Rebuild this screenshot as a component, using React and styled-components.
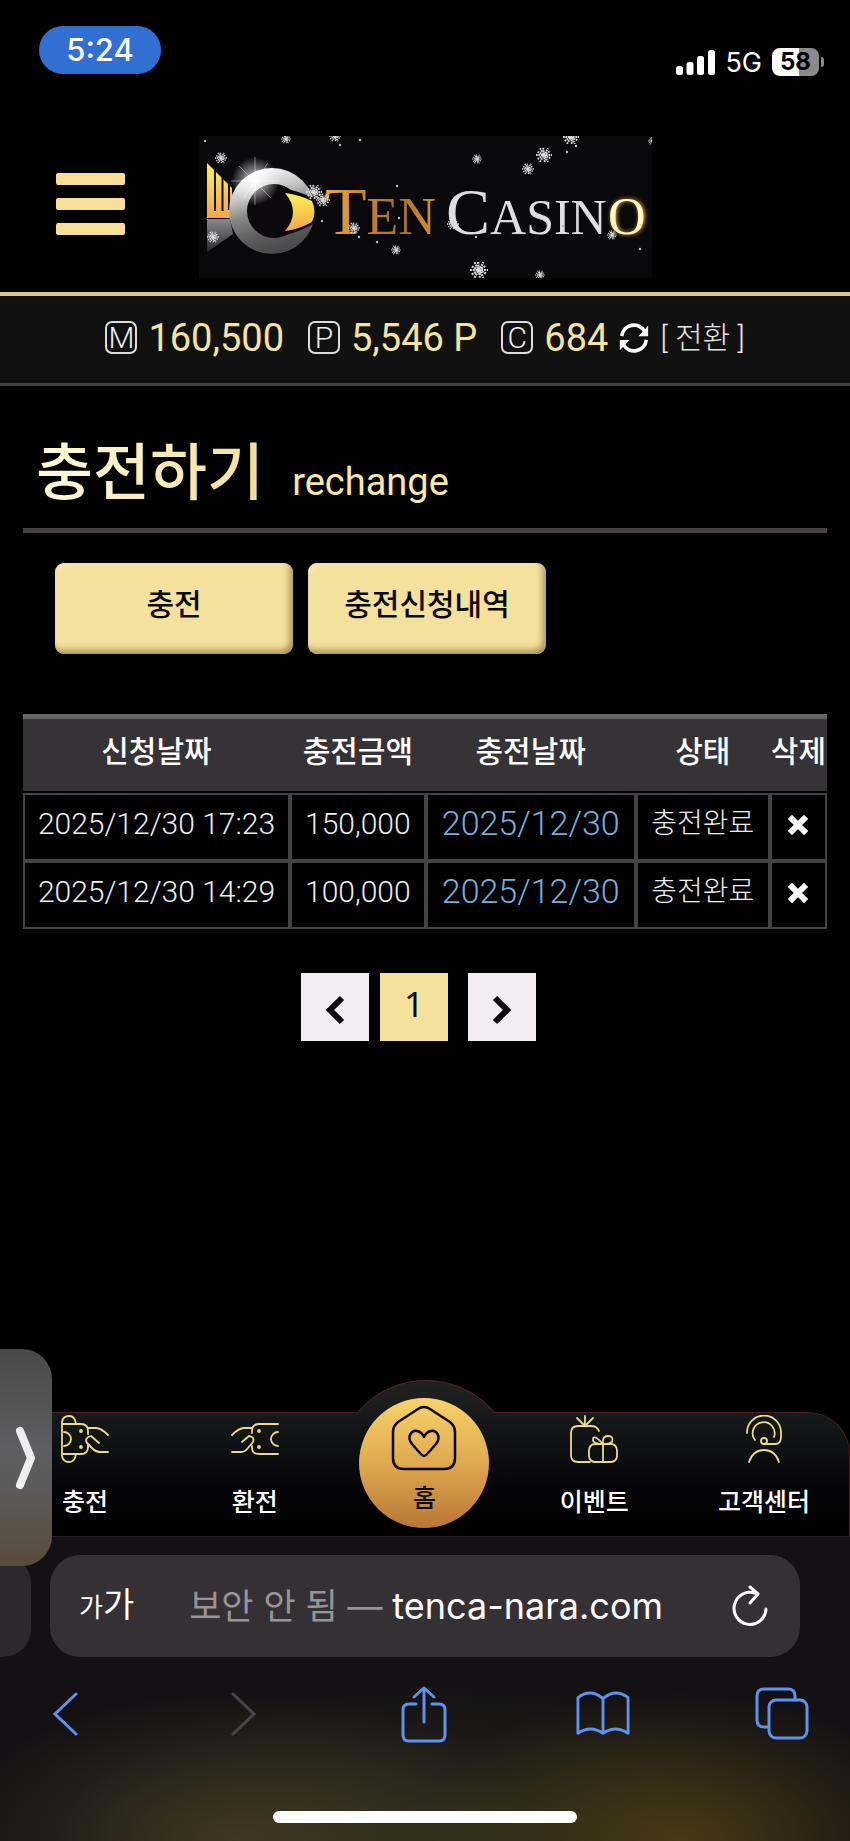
import React from 'react';
import styled, { createGlobalStyle } from 'styled-components';

const GlobalStyle = createGlobalStyle`
  * {
    box-sizing: border-box;
  }

  body {
    margin: 0;
    background: #000;
    color: #fff;
    font-family: Roboto, 'Noto Sans CJK KR', sans-serif;
  }

  button {
    margin: 0;
    padding: 0;
    border: 0;
    background: none;
    color: inherit;
    font: inherit;
    cursor: pointer;
  }

  a {
    color: inherit;
    text-decoration: none;
  }

  svg {
    display: block;
  }
`;

const Page = styled.div`
  position: relative;
  display: flex;
  flex-direction: column;
  min-height: 100vh;
  overflow: hidden;
`;

/* Status bar */

const StatusBar = styled.div`
  display: flex;
  align-items: flex-start;
  justify-content: space-between;
  height: 120px;
  padding: 26px 26px 0 39px;
  font-family: Inter, sans-serif;
`;

const Clock = styled.div`
  width: 122px;
  height: 48px;
  border-radius: 24px;
  background: #3170d2;
  font-size: 31px;
  font-weight: 500;
  line-height: 48px;
  text-align: center;
`;

const StatusIcons = styled.div`
  display: flex;
  align-items: center;
  gap: 10px;
  height: 28px;
  margin-top: 22px;
  font-size: 27px;
  font-weight: 400;
`;

const Battery = styled.div`
  position: relative;
  width: 47px;
  height: 28px;
  margin-right: 5px;
  border-radius: 8px;
  background: linear-gradient(90deg, #fff 58%, #8b8b8b 58%);
  color: #000;
  font-size: 24px;
  font-weight: 700;
  line-height: 28px;
  text-align: center;

  &::after {
    content: '';
    position: absolute;
    top: 9px;
    right: -5px;
    width: 3px;
    height: 10px;
    border-radius: 0 3px 3px 0;
    background: #8b8b8b;
  }
`;

/* Header */

const Header = styled.header`
  display: grid;
  grid-template-columns: 1fr auto 1fr;
  align-items: center;
  height: 176px;
  padding: 2px 56px 0;
  border-bottom: 4px solid #d9c89a;
`;

const MenuButton = styled.button`
  display: flex;
  flex-direction: column;
  gap: 13px;
  width: 69px;
  margin-bottom: 6px;
`;

const MenuLine = styled.span`
  height: 12px;
  border-radius: 2px;
  background: #f7df98;
`;

const Balance = styled.section`
  display: flex;
  align-items: center;
  justify-content: center;
  gap: 24px;
  height: 90px;
  padding-bottom: 4px;
  border-bottom: 3px solid #454346;
  background: #121112;
`;

const BalanceItem = styled.div`
  display: flex;
  align-items: center;
  gap: 11px;
  color: #f6e3a0;
  font-size: 38px;
  line-height: 40px;
`;

const BalanceMark = styled.span`
  width: 32px;
  height: 33px;
  border: 2px solid #ddd;
  border-radius: 7px;
  color: #eee;
  font-size: 30px;
  font-weight: 300;
  line-height: 30px;
  text-align: center;
`;

const ConvertButton = styled.button`
  color: #e6e6e6;
  font-size: 30px;
  font-weight: 300;
  line-height: 36px;
`;

/* Page content */

const Main = styled.main`
  flex: 1;
  padding: 0 23px;
`;

const TitleRow = styled.div`
  display: flex;
  align-items: baseline;
  gap: 28px;
  height: 147px;
  padding: 44px 13px 0;
  border-bottom: 5px solid #464246;
`;

const Title = styled.h1`
  margin: 0;
  background: linear-gradient(90deg, #fffbdc, #f5e09a);
  background-clip: text;
  color: transparent;
  font-size: 62px;
  font-weight: 500;
  line-height: 88px;
`;

const SubTitle = styled.span`
  color: #f8e7a8;
  font-size: 38px;
`;

const TabRow = styled.div`
  display: flex;
  gap: 15px;
  padding: 30px 32px 60px;
`;

const TabButton = styled.button`
  width: 238px;
  height: 91px;
  padding-bottom: 14px;
  border-radius: 9px;
  background: #f4e19c;
  box-shadow: inset -3px -4px 6px rgba(90, 70, 10, 0.5), inset 2px 2px 5px rgba(255, 240, 220, 0.6);
  color: #0a0806;
  font-size: 30px;
  font-weight: 500;
`;

const Table = styled.table`
  width: 100%;
  table-layout: fixed;
  border-collapse: separate;
  border-spacing: 0;
  text-align: center;
`;

const Col = styled.col`
  width: ${(props) => props.$width};
`;

const HeadCell = styled.th`
  height: 79px;
  padding: 0 0 12px;
  border-top: 5px solid #676467;
  border-bottom: 2px solid #000;
  background: #363336;
  background-clip: padding-box;
  font-size: 30px;
  font-weight: 500;
  white-space: nowrap;
`;

const Cell = styled.td`
  height: 68px;
  padding: 0 0 6px;
  border: 2px solid #464346;
  color: #eee;
  font-size: ${(props) => props.$size || 30}px;
  font-weight: 300;
  line-height: 40px;
  white-space: nowrap;
`;

const DateText = styled.span`
  color: #76addc;
  font-size: 34px;
`;

const DeleteButton = styled.button`
  display: block;
  margin: 2px auto 0;
`;

const Pagination = styled.nav`
  display: flex;
  justify-content: center;
  gap: 11px;
  padding-right: 13px;
  margin-top: 44px;
`;

const PageButton = styled.button`
  display: flex;
  align-items: center;
  justify-content: center;
  width: 68px;
  height: 68px;
  padding-top: 6px;
  background: #f1edf1;
  color: #0b090b;

  &:last-child {
    margin-left: 9px;
  }

  &[aria-current] {
    padding: 0 0 8px;
    background: #f4e19c;
    font-family: 'Noto Sans', sans-serif;
    font-size: 35px;
  }
`;

/* Site navigation */

const NavWrap = styled.div`
  position: relative;
`;

const NavBulge = styled.div`
  position: absolute;
  z-index: 1;
  top: -32px;
  left: calc(50% - 70px);
  width: 140px;
  height: 33px;
  overflow: hidden;

  &::before {
    content: '';
    position: absolute;
    left: -19px;
    width: 178px;
    height: 178px;
    border: 1px solid #5c2424;
    border-radius: 50%;
    background: linear-gradient(#222121, #161818 40px);
  }
`;

const BottomNav = styled.nav`
  display: grid;
  grid-template-columns: repeat(5, 1fr);
  height: 124px;
  border: 1px solid #4d1d20;
  border-width: 1px 1px 0 0;
  border-radius: 0 42px 0 0;
  background: linear-gradient(#171a1b, #060507 60%, #000);
`;

const NavLink = styled.a`
  display: flex;
  flex-direction: column;
  align-items: center;
  gap: 21px;
  padding-top: 2px;
  font-size: 25px;
  font-weight: 500;
  line-height: 38px;
`;

const HomeLink = styled.a`
  position: relative;
  z-index: 2;
  display: flex;
  flex-direction: column;
  align-items: center;
  justify-self: center;
  gap: 10px;
  width: 130px;
  height: 130px;
  margin-top: -15px;
  padding-top: 7px;
  border-radius: 50%;
  background: linear-gradient(#f9d36a, #dfa950 50%, #b97634);
  color: #0c0703;
  font-size: 25px;
  font-weight: 500;
  line-height: 36px;
`;

/* Browser chrome */

const BrowserBar = styled.footer`
  height: 305px;
  padding-top: 18px;
  border-top: 1px solid #252326;
  background:
    radial-gradient(ellipse 260px 150px at 80% 100%, rgba(82, 65, 20, 0.8), transparent),
    radial-gradient(ellipse 300px 150px at 28% 100%, rgba(76, 64, 38, 0.75), transparent),
    radial-gradient(ellipse 380px 160px at 52% 100%, rgba(50, 53, 32, 0.7), transparent),
    #131114;
`;

const AddressRow = styled.div`
  display: flex;
  gap: 19px;
  padding-right: 50px;
`;

const PreviousTab = styled.div`
  width: 31px;
  height: 102px;
  border-radius: 0 28px 28px 0;
  background: #2c292c;
`;

const AddressBar = styled.div`
  display: flex;
  flex: 1;
  align-items: center;
  justify-content: space-between;
  height: 102px;
  padding: 0 32px 0 29px;
  border-radius: 30px;
  background: #343034;
`;

const TextSizeButton = styled.button`
  font-size: 34px;
  line-height: 44px;

  small {
    font-size: 26px;
  }
`;

const Address = styled.button`
  margin-right: 14px;
  font-family: Inter, 'Noto Sans CJK KR', sans-serif;
  font-size: 36px;
  line-height: 44px;
  white-space: nowrap;
`;

const Insecure = styled.span`
  color: #989498;
  font-size: 35px;
`;

const Toolbar = styled.div`
  display: flex;
  align-items: center;
  justify-content: space-between;
  height: 60px;
  margin-top: 27px;
  padding: 0 41px 0 38px;
  color: #5f91ee;
`;

const ToolButton = styled.button`
  display: flex;
  justify-content: center;
  width: 54px;

  &:disabled {
    color: #48464a;
  }
`;

const HomeIndicator = styled.div`
  width: 304px;
  height: 12px;
  margin: 67px auto 0;
  border-radius: 6px;
  background: #fff;
`;

const SideHandle = styled.button`
  position: absolute;
  z-index: 3;
  bottom: 275px;
  left: 0;
  display: flex;
  align-items: center;
  width: 52px;
  height: 217px;
  padding-left: 14px;
  border-radius: 0 30px 30px 0;
  background: linear-gradient(#494949, #5e5e60 45%, #5b5a5a 65%, #594b3b);
`;

const flakes = [
  [22, 22, 6], [87, 3, 5], [136, 0, 6], [14, 101, 6], [115, 56, 8], [124, 64, 7],
  [155, 92, 6], [197, 114, 5], [278, 23, 5], [329, 33, 6], [345, 19, 8], [372, 1, 8],
  [254, 88, 6], [280, 134, 9], [341, 139, 5], [413, 99, 5], [453, 5, 4]
];

const sparks = [
  [6, 5], [141, 9], [161, 4], [123, 85], [160, 101], [178, 106],
  [200, 82], [198, 50], [368, 16], [377, 10], [364, 90], [277, 101], [441, 113]
];

function Logo() {
  return (
    <svg width="453" height="142" viewBox="0 0 453 142" role="img" aria-label="Ten Casino">
      <defs>
        <linearGradient id="ring" x1="0.3" y1="0" x2="0.6" y2="1">
          <stop offset="0" stopColor="#fff" />
          <stop offset="0.3" stopColor="#c4c4c4" />
          <stop offset="0.5" stopColor="#858585" />
          <stop offset="0.75" stopColor="#5c5c5c" />
          <stop offset="1" stopColor="#474548" />
        </linearGradient>
        <linearGradient id="gold" x1="0" y1="0" x2="0" y2="1">
          <stop offset="0" stopColor="#fff05c" />
          <stop offset="0.5" stopColor="#f8cc4b" />
          <stop offset="1" stopColor="#f3a653" />
        </linearGradient>
        <linearGradient id="bronze" x1="0" y1="0" x2="1" y2="0">
          <stop offset="0" stopColor="#eda93f" />
          <stop offset="0.35" stopColor="#c8862e" />
          <stop offset="0.65" stopColor="#a96f29" />
          <stop offset="1" stopColor="#d78f2b" />
        </linearGradient>
        <linearGradient id="steel" x1="0" y1="0" x2="0" y2="1">
          <stop offset="0" stopColor="#8a8a8c" />
          <stop offset="1" stopColor="#2a2a2c" />
        </linearGradient>
        <radialGradient id="glow">
          <stop offset="0" stopColor="#fff" />
          <stop offset="0.3" stopColor="#fff" stopOpacity="0.6" />
          <stop offset="1" stopColor="#fff" stopOpacity="0" />
        </radialGradient>
        <filter id="halo" x="-50%" y="-50%" width="200%" height="200%">
          <feDropShadow dx="1" dy="0" stdDeviation="2" floodColor="#f3ad28" />
        </filter>
        <g id="flake" stroke="#dcdcdc" strokeWidth="0.24">
          <path d="M-1 0H1M-.5-.86.5.86M-.5.86.5-.86M-.8-.4.8.4M-.1-.9.1.9M-.8.5.8-.5" strokeDasharray="0.22 0.09" />
        </g>
      </defs>
      <rect width="453" height="142" fill="#09080b" />
      <path d="M8 83H31L34 98 8 116Z" fill="url(#steel)" />
      <path d="M8 27 33 52V68L31 82H8Z" fill="url(#gold)" />
      <path d="M16 34V75M23.5 41V75M30 47V74" stroke="#171207" strokeWidth="2" />
      <circle cx="73" cy="75" r="43" fill="url(#ring)" />
      <circle cx="75" cy="75" r="27" fill="#0b090c" />
      <path d="M79 50Q98 55 118 63V86Q99 97 79 101Q93 76 79 50Z" fill="#0b090c" />
      <path d="M86 57Q101 59 113 65Q118 76 113 86Q101 93 86 95Q102 76 86 57Z" fill="url(#gold)" />
      <circle cx="56" cy="45" r="24" fill="url(#glow)" />
      <path d="M56 21V69M32 45H80M40 30 72 62M45 61 69 27" stroke="#fff" strokeWidth="0.7" opacity="0.6" />
      <g fontFamily="'Liberation Serif', serif">
        <text x="126" y="98" fontSize="68" fill="url(#bronze)">
          T<tspan fontSize="52">EN</tspan>
        </text>
        <text x="247" y="98" fontSize="66" fill="#dddde2">
          C<tspan fontSize="50">ASIN</tspan>
        </text>
        <text x="409" y="98" fontSize="52" fill="#fff5c4" filter="url(#halo)">O</text>
      </g>
      {flakes.map(([x, y, r]) => (
        <use key={`${x}-${y}`} href="#flake" transform={`translate(${x} ${y}) scale(${r})`} />
      ))}
      {sparks.map(([x, y]) => (
        <circle key={`${x}-${y}`} cx={x} cy={y} r="1.2" fill="#bbb" />
      ))}
    </svg>
  );
}

function SignalIcon() {
  return (
    <svg width="39" height="26" viewBox="0 0 39 26" fill="#fff" aria-hidden="true">
      <rect y="17" width="7" height="9" rx="2.5" />
      <rect x="10.5" y="13" width="7" height="13" rx="2.5" />
      <rect x="21" y="7" width="7" height="19" rx="2.5" />
      <rect x="32" y="1" width="7" height="25" rx="2.5" />
    </svg>
  );
}

function SyncIcon() {
  return (
    <svg width="30" height="30" viewBox="0 0 34 32" preserveAspectRatio="none" aria-hidden="true">
      <g fill="none" stroke="#fff" strokeWidth="4">
        <path d="M3 14C5 1 22-2 29 9" />
        <path d="M31 18C29 31 12 34 5 23" />
      </g>
      <path d="M33 3V14H22ZM1 29V18H12Z" fill="#fff" />
    </svg>
  );
}

function CrossIcon() {
  return (
    <svg width="20" height="20" viewBox="0 0 20 20" aria-hidden="true">
      <path d="M4 4 16 16M16 4 4 16" stroke="#fff" strokeWidth="6" strokeLinecap="square" />
    </svg>
  );
}

function ArrowIcon({ right }) {
  return (
    <svg width="22" height="30" viewBox="0 0 22 30" fill="none" stroke="currentColor" strokeWidth="6" aria-hidden="true">
      <path d={right ? 'M4 3 16 15 4 27' : 'M18 3 6 15 18 27'} />
    </svg>
  );
}

function LineIcon({ children }) {
  return (
    <svg width="48" height="48" viewBox="0 0 48 48" fill="none" stroke="#ead98f" strokeWidth="1.8" strokeLinecap="round" strokeLinejoin="round" aria-hidden="true">
      {children}
    </svg>
  );
}

const DepositIcon = () => (
  <LineIcon>
    <path d="M1 9V7Q2 1 8 1T15 9M1 39V41Q2 47 8 47T15 39M1 8V40M1 9H20Q27 9 27 16V19M27 29V32Q27 39 20 39H1" />
    <path d="M3 17A7 7 0 0 1 3 31" />
    <circle cx="20" cy="16" r="1" fill="#ead98f" />
    <circle cx="20" cy="32" r="1" fill="#ead98f" />
    <path d="M27 13H35Q40 13 47 20M38 28 30 21Q23 23 26 28L32 34Q35 37 39 37H47" />
  </LineIcon>
);

const WithdrawIcon = () => (
  <LineIcon>
    <path d="M47 9H28Q21 9 21 16V18M21 31V33Q21 39 28 39H47M47 17A7 7 0 0 0 47 31" />
    <circle cx="28" cy="16" r="1" fill="#ead98f" />
    <circle cx="28" cy="32" r="1" fill="#ead98f" />
    <path d="M21 13H13Q8 13 1 20M11 27 18 21Q24 22 22 27L17 33Q14 37 10 37H1" />
  </LineIcon>
);

const EventIcon = () => (
  <LineIcon>
    <path d="M15 11V1M15 11 7 3M15 11 23 3M20 47H8Q1 47 1 40V18Q1 11 8 11H21Q27 11 29 16" />
    <rect x="19" y="29" width="28" height="18" rx="6" />
    <path d="M33 29V47M33 29Q22 29 23 24T33 29M33 29Q32 21 38 21T42 27Q39 29 33 29" />
  </LineIcon>
);

const SupportIcon = () => (
  <LineIcon>
    <path d="M7 18A17 17 0 0 1 41 17V22Q41 29 35 29H24M15 25A11 11 0 1 1 34 22" />
    <circle cx="24" cy="26" r="3" />
    <path d="M9 47Q13 35 24 35T39 47" />
  </LineIcon>
);

function HomeIcon() {
  return (
    <svg width="66" height="66" viewBox="0 0 66 66" fill="none" stroke="#0c0703" strokeWidth="2.5" strokeLinejoin="round" aria-hidden="true">
      <path d="M27 4Q33 0 39 4L59 17Q64 21 64 27V53Q64 64 53 64H13Q2 64 2 53V27Q2 21 7 17Z" />
      <path d="M33 51Q31 51 21 39C15 31 21 25 26 26Q31 27 33 32Q35 27 40 26C45 25 51 31 45 39Q35 51 33 51Z" />
    </svg>
  );
}

const ReloadIcon = () => (
  <svg width="36" height="42" viewBox="0 0 36 42" fill="none" stroke="#fff" strokeWidth="3" strokeLinecap="round" strokeLinejoin="round" aria-hidden="true">
    <path d="M34 24A16 16 0 1 1 25 9M18 2 26 9 18 18" />
  </svg>
);

const Chevron = ({ right }) => (
  <svg width="26" height="44" viewBox="0 0 26 44" fill="none" stroke="currentColor" strokeWidth="3" strokeLinecap="round" aria-hidden="true">
    <path d={right ? 'M2 2 23 22 2 42' : 'M24 2 3 22 24 42'} />
  </svg>
);

const ShareIcon = () => (
  <svg width="46" height="58" viewBox="0 0 46 58" fill="none" stroke="currentColor" strokeWidth="3" strokeLinecap="round" strokeLinejoin="round" aria-hidden="true">
    <path d="M15 19H8Q2 19 2 25V50Q2 56 8 56H38Q44 56 44 50V25Q44 19 38 19H31M23 37V3M13 12 23 3 33 12" />
  </svg>
);

const BookIcon = () => (
  <svg width="56" height="50" viewBox="0 0 56 50" fill="none" stroke="currentColor" strokeWidth="3" strokeLinejoin="round" aria-hidden="true">
    <path d="M28 9Q15-2 2 8V45Q15 36 28 45Q41 36 54 45V8Q41-2 28 9V45" />
  </svg>
);

const TabsIcon = () => (
  <svg width="54" height="54" viewBox="0 0 54 54" fill="none" stroke="currentColor" strokeWidth="3" aria-hidden="true">
    <path d="M14 40H9Q2 40 2 33V9Q2 2 9 2H33Q40 2 40 9V13" />
    <rect x="14" y="13" width="38" height="38" rx="7" />
  </svg>
);

const rows = [
  { requested: '2025/12/30 17:23', amount: '150,000', date: '2025/12/30', status: '충전완료' },
  { requested: '2025/12/30 14:29', amount: '100,000', date: '2025/12/30', status: '충전완료' }
];

export default function App() {
  return (
    <>
      <GlobalStyle />
      <Page>
        <StatusBar>
          <Clock>5:24</Clock>
          <StatusIcons>
            <SignalIcon />
            <span>5G</span>
            <Battery>58</Battery>
          </StatusIcons>
        </StatusBar>

        <Header>
          <MenuButton aria-label="메뉴">
            <MenuLine />
            <MenuLine />
            <MenuLine />
          </MenuButton>
          <a href="#home"><Logo /></a>
        </Header>

        <Balance>
          <BalanceItem><BalanceMark>M</BalanceMark>160,500</BalanceItem>
          <BalanceItem><BalanceMark>P</BalanceMark>5,546 P</BalanceItem>
          <BalanceItem>
            <BalanceMark>C</BalanceMark>684
            <SyncIcon />
            <ConvertButton>[ 전환 ]</ConvertButton>
          </BalanceItem>
        </Balance>

        <Main>
          <TitleRow>
            <Title>충전하기</Title>
            <SubTitle>rechange</SubTitle>
          </TitleRow>

          <TabRow>
            <TabButton>충전</TabButton>
            <TabButton>충전신청내역</TabButton>
          </TabRow>

          <Table>
            <colgroup>
              <Col $width="33.2%" />
              <Col $width="16.9%" />
              <Col $width="26.1%" />
              <Col $width="16.7%" />
              <Col $width="7.1%" />
            </colgroup>
            <thead>
              <tr>
                <HeadCell>신청날짜</HeadCell>
                <HeadCell>충전금액</HeadCell>
                <HeadCell>충전날짜</HeadCell>
                <HeadCell>상태</HeadCell>
                <HeadCell>삭제</HeadCell>
              </tr>
            </thead>
            <tbody>
              {rows.map((row) => (
                <tr key={row.requested}>
                  <Cell>{row.requested}</Cell>
                  <Cell>{row.amount}</Cell>
                  <Cell><DateText>{row.date}</DateText></Cell>
                  <Cell $size={28}>{row.status}</Cell>
                  <Cell>
                    <DeleteButton aria-label="삭제"><CrossIcon /></DeleteButton>
                  </Cell>
                </tr>
              ))}
            </tbody>
          </Table>

          <Pagination>
            <PageButton aria-label="이전"><ArrowIcon /></PageButton>
            <PageButton aria-current="page">1</PageButton>
            <PageButton aria-label="다음"><ArrowIcon right /></PageButton>
          </Pagination>
        </Main>

        <NavWrap>
          <NavBulge />
          <BottomNav>
            <NavLink href="#deposit"><DepositIcon />충전</NavLink>
            <NavLink href="#withdraw"><WithdrawIcon />환전</NavLink>
            <HomeLink href="#home"><HomeIcon />홈</HomeLink>
            <NavLink href="#event"><EventIcon />이벤트</NavLink>
            <NavLink href="#support"><SupportIcon />고객센터</NavLink>
          </BottomNav>
        </NavWrap>

        <BrowserBar>
          <AddressRow>
            <PreviousTab />
            <AddressBar>
              <TextSizeButton><small>가</small>가</TextSizeButton>
              <Address><Insecure>보안 안 됨 — </Insecure>tenca-nara.com</Address>
              <button aria-label="새로고침"><ReloadIcon /></button>
            </AddressBar>
          </AddressRow>
          <Toolbar>
            <ToolButton aria-label="뒤로"><Chevron /></ToolButton>
            <ToolButton aria-label="앞으로" disabled><Chevron right /></ToolButton>
            <ToolButton aria-label="공유"><ShareIcon /></ToolButton>
            <ToolButton aria-label="책갈피"><BookIcon /></ToolButton>
            <ToolButton aria-label="탭"><TabsIcon /></ToolButton>
          </Toolbar>
          <HomeIndicator />
        </BrowserBar>

        <SideHandle aria-label="열기">
          <svg width="26" height="66" viewBox="0 0 26 66" fill="none" stroke="#eeeef0" strokeWidth="8" strokeLinecap="round" strokeLinejoin="round" aria-hidden="true">
            <path d="M6 6 17 33 6 60" />
          </svg>
        </SideHandle>
      </Page>
    </>
  );
}
